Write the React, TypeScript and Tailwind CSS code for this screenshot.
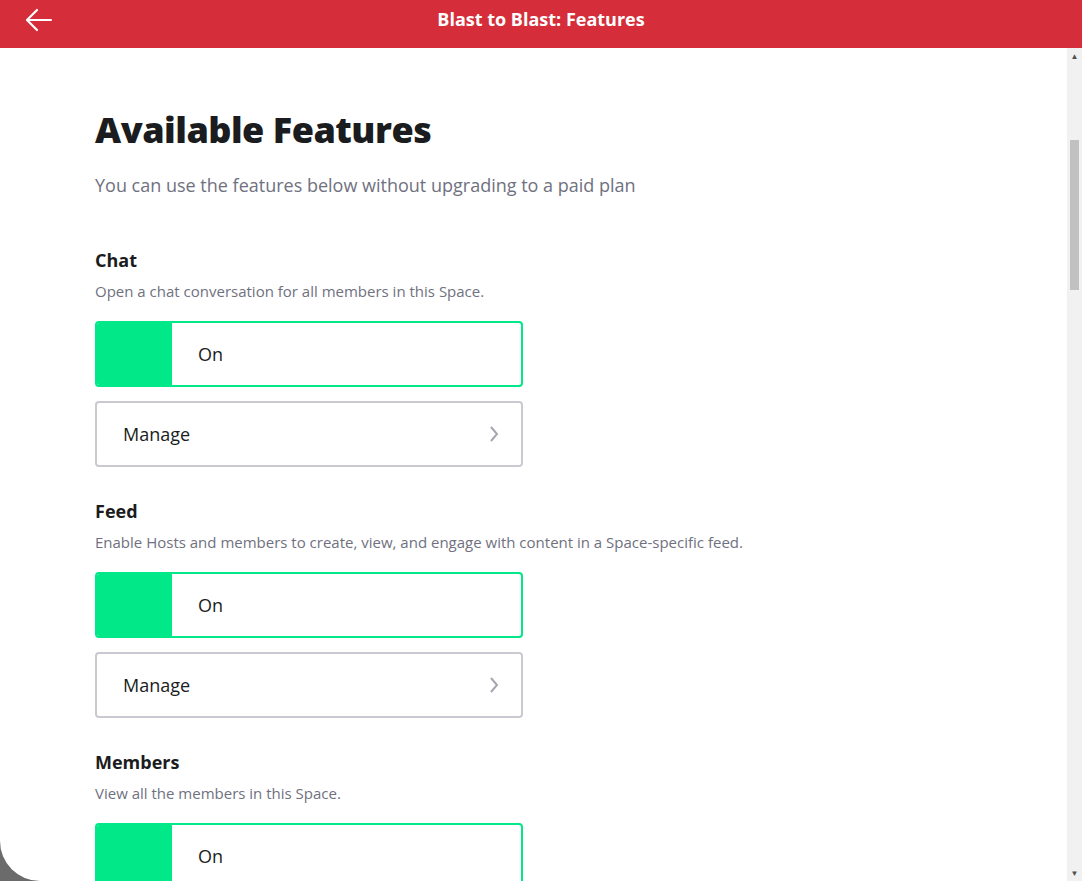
import React from "react";

const sections = [
  { t: "Chat", d: "Open a chat conversation for all members in this Space." },
  { t: "Feed", d: "Enable Hosts and members to create, view, and engage with content in a Space-specific feed." },
  { t: "Members", d: "View all the members in this Space." },
];

export default function App() {
  return (
    <div className="h-[881px] w-[1082px] overflow-hidden bg-[#6b6b6b] flex flex-col" style={{ fontFamily: "'Open Sans', 'Noto Sans', sans-serif" }}>
      <div className="h-[48px] bg-[#d62d3a] flex items-center relative shrink-0">
        <svg className="absolute left-[25px] top-[8px]" width="28" height="24" viewBox="0 0 28 24" fill="none" stroke="white" strokeWidth="2.2" strokeLinecap="round" strokeLinejoin="round">
          <path d="M26 12H3M12 2L2 12l10 10" />
        </svg>
        <div className="w-full text-center text-white font-bold text-[18px] leading-[24px] -mt-[10px]">Blast to Blast: Features</div>
      </div>
      <div className="flex-1 flex bg-white rounded-bl-[40px] overflow-hidden">
        <div className="flex-1 pl-[95px] pt-[60px]">
          <h1 className="text-[36px] font-extrabold text-[#1a1c20] leading-[44px] tracking-[-0.5px]">Available Features</h1>
          <p className="mt-[20px] text-[18px] text-[#6f7180] leading-[26px]">You can use the features below without upgrading to a paid plan</p>
          <div className="mt-[50px] flex flex-col gap-[32px]">
            {sections.map((s) => (
              <div key={s.t}>
                <div className="text-[18px] font-bold text-[#1a1c20] leading-[24px]">{s.t}</div>
                <div className="mt-[9px] text-[15px] text-[#6f7180] leading-[20px]">{s.d}</div>
                <div className="mt-[20px] w-[428px] h-[66px] border-2 border-[#00e887] rounded-[4px] flex overflow-hidden">
                  <div className="w-[75px] bg-[#00e887]" />
                  <div className="flex-1 flex items-center pl-[26px] text-[18px] text-[#1a1c20]">On</div>
                </div>
                <div className="mt-[14px] w-[428px] h-[66px] border-2 border-[#c9cad1] rounded-[4px] flex items-center justify-between pl-[26px] pr-[22px] text-[18px] text-[#1a1c20]">
                  <span>Manage</span>
                  <svg width="10" height="18" viewBox="0 0 10 18" fill="none" stroke="#a5a7b0" strokeWidth="2"><path d="M2 2l6 7-6 7" /></svg>
                </div>
              </div>
            ))}
          </div>
        </div>
        <div className="w-[15px] bg-[#f1f1f1] flex flex-col items-center">
          <div className="text-[8px] text-[#505050] mt-[2px]">▲</div>
          <div className="w-[9px] h-[150px] bg-[#c1c1c1] mt-[78px]" />
          <div className="flex-1" />
          <div className="text-[8px] text-[#505050] mb-[2px]">▼</div>
        </div>
      </div>
    </div>
  );
}
